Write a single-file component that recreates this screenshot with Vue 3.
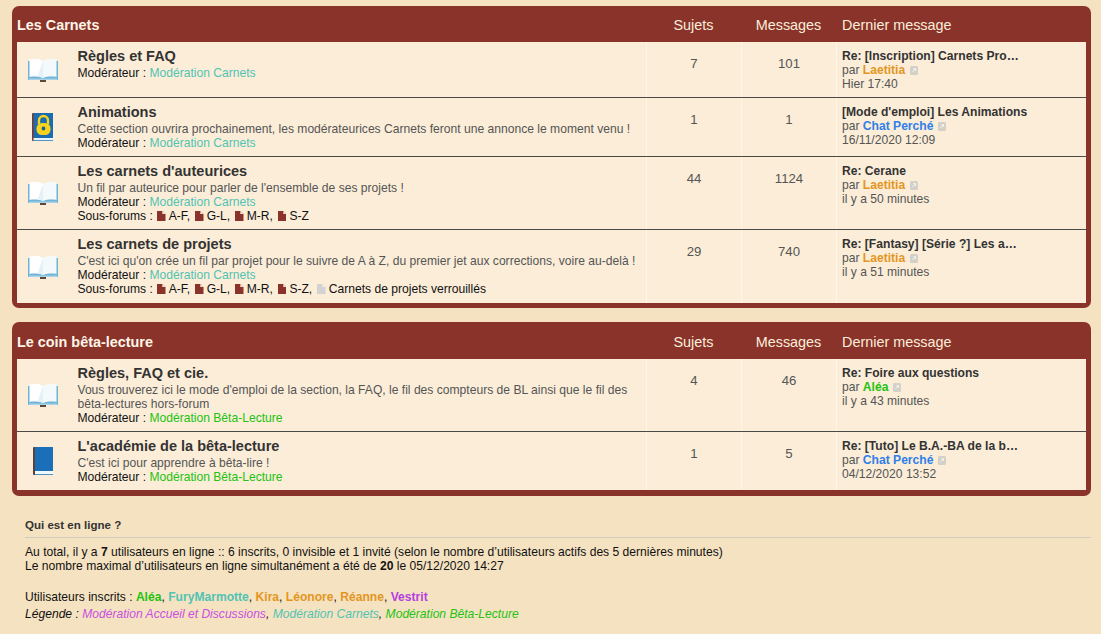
<script setup>
const teal = '#52c3b3'
const green = '#22c311'
const orange = '#e3961f'
const blue = '#2f7fe8'
const purple = '#b53fe0'

const carnetsMod = { label: 'Modération Carnets', color: teal }
const betaMod = { label: 'Modération Bêta-Lecture', color: green }

const sections = [
  {
    name: 'Les Carnets',
    rows: [
      {
        icon: 'open', height: 56, title: 'Règles et FAQ', mod: carnetsMod, topics: 7, posts: 101,
        last: 'Re: [Inscription] Carnets Pro…', author: 'Laetitia', color: orange, date: 'Hier 17:40',
      },
      {
        icon: 'lock', height: 59, title: 'Animations',
        desc: ['Cette section ouvrira prochainement, les modérateurices Carnets feront une annonce le moment venu !'],
        mod: carnetsMod, topics: 1, posts: 1,
        last: "[Mode d'emploi] Les Animations", author: 'Chat Perché', color: blue, date: '16/11/2020 12:09',
      },
      {
        icon: 'open', height: 73, title: "Les carnets d'auteurices",
        desc: ["Un fil par auteurice pour parler de l'ensemble de ses projets !"],
        mod: carnetsMod, subs: ['A-F', 'G-L', 'M-R', 'S-Z'], topics: 44, posts: 1124,
        last: 'Re: Cerane', author: 'Laetitia', color: orange, date: 'il y a 50 minutes',
      },
      {
        icon: 'open', height: 73, title: 'Les carnets de projets',
        desc: ["C'est ici qu'on crée un fil par projet pour le suivre de A à Z, du premier jet aux corrections, voire au-delà !"],
        mod: carnetsMod, subs: ['A-F', 'G-L', 'M-R', 'S-Z'], locked: 'Carnets de projets verrouillés', topics: 29, posts: 740,
        last: 'Re: [Fantasy] [Série ?] Les a…', author: 'Laetitia', color: orange, date: 'il y a 51 minutes',
      },
    ],
  },
  {
    name: 'Le coin bêta-lecture',
    rows: [
      {
        icon: 'open', height: 73, title: 'Règles, FAQ et cie.',
        desc: ["Vous trouverez ici le mode d'emploi de la section, la FAQ, le fil des compteurs de BL ainsi que le fil des", 'bêta-lectures hors-forum'],
        mod: betaMod, topics: 4, posts: 46,
        last: 'Re: Foire aux questions', author: 'Aléa', color: green, date: 'il y a 43 minutes',
      },
      {
        icon: 'closed', height: 58, title: "L'académie de la bêta-lecture",
        desc: ["C'est ici pour apprendre à bêta-lire !"],
        mod: betaMod, topics: 1, posts: 5,
        last: 'Re: [Tuto] Le B.A.-BA de la b…', author: 'Chat Perché', color: blue, date: '04/12/2020 13:52',
      },
    ],
  },
]

const online = [
  { name: 'Aléa', color: green },
  { name: 'FuryMarmotte', color: teal },
  { name: 'Kira', color: orange },
  { name: 'Léonore', color: orange },
  { name: 'Réanne', color: orange },
  { name: 'Vestrit', color: purple },
]

const legend = [
  { name: 'Modération Accueil et Discussions', color: '#c94fe0' },
  { name: 'Modération Carnets', color: teal },
  { name: 'Modération Bêta-Lecture', color: green },
]
</script>

<template>
  <div class="page">
    <section v-for="section in sections" :key="section.name" class="panel">
      <header class="panel-head">
        <h2 class="panel-name">{{ section.name }}</h2>
        <span class="head-num">Sujets</span>
        <span class="head-num">Messages</span>
        <span class="head-last">Dernier message</span>
      </header>

      <div
        v-for="row in section.rows"
        :key="row.title"
        class="row"
        :style="{ height: row.height + 'px' }"
      >
        <div class="forum-icon">
          <!-- livre ouvert -->
          <svg v-if="row.icon === 'open'" width="30" height="24" viewBox="0 0 30 24">
            <path d="M0 3h30v19H0z" fill="#6fb3d6" />
            <path d="M1.500 1.500C6 0 11 .5 15 3v17c-4-1.500-9-1.800-13.500-1z" fill="#fff" />
            <path d="M28.500 1.500C24 0 19 .5 15 3v17c4-1.500 9-1.800 13.500-1z" fill="#f4fafc" />
            <path d="M15 3v17c-1.500-.8-3.500-1.300-5.500-1.600z" fill="#e4f2f8" />
            <path d="M1 20.500h28V22H1z" fill="#a9d3e8" />
            <rect x="12" y="22" width="6" height="2" fill="#5b4a3c" />
          </svg>
          <!-- livre avec cadenas -->
          <svg v-else-if="row.icon === 'lock'" width="22" height="29" viewBox="0 0 22 29">
            <rect x="0" y="0" width="21" height="28" rx="1" fill="#7a3b2e" />
            <rect x="1.500" y="0" width="19.500" height="25" fill="#1b6cb0" />
            <rect x="1.500" y="25" width="19.500" height="2" fill="#eaf5fb" />
            <rect x="1.500" y="27" width="19.500" height="1" fill="#4d95c9" />
            <path d="M7 11V7.500a4.500 4.500 0 0 1 9 0V11" fill="none" stroke="#f7d31c" stroke-width="2.400" />
            <rect x="4.500" y="10" width="14" height="12" rx="5.500" fill="#f7d31c" />
            <path d="M11.500 13.500c1.200 0 1.800 1 1.800 1.900 0 1.100-.8 2-1.800 2s-1.800-.9-1.800-2c0-.9.600-1.900 1.800-1.900z" fill="#1b5f8c" />
          </svg>
          <!-- livre fermé -->
          <svg v-else width="21" height="28" viewBox="0 0 21 28">
            <rect x="0" y="0" width="20" height="28" rx="1" fill="#5d4037" />
            <rect x="2" y="0" width="18" height="24" fill="#1a6fb8" />
            <rect x="2" y="24" width="18" height="3" fill="#f2f9fc" />
            <rect x="2" y="27" width="18" height="1" fill="#4d95c9" />
          </svg>
        </div>

        <div class="forum-main">
          <a class="forum-title">{{ row.title }}</a>
          <p v-for="line in row.desc" :key="line" class="forum-desc">{{ line }}</p>
          <p class="forum-meta">
            Modérateur :
            <a :style="{ color: row.mod.color }">{{ row.mod.label }}</a>
          </p>
          <p v-if="row.subs" class="forum-meta">
            Sous-forums :
            <span v-for="(sub, i) in row.subs" :key="sub" class="sub">
              <svg class="doc" width="8.500" height="10" viewBox="0 0 8 10" preserveAspectRatio="none">
                <path d="M0 0h5l3 3v7H0z" fill="#89332a" />
                <path d="M5 0v3h3z" fill="#faecd6" />
              </svg>{{ sub }}{{ i < row.subs.length - 1 || row.locked ? ',' : '' }}
            </span>
            <span v-if="row.locked" class="sub">
              <svg class="doc" width="8.500" height="10" viewBox="0 0 8 10" preserveAspectRatio="none">
                <path d="M0 0h5l3 3v7H0z" fill="#d2d2d2" />
                <path d="M5 0v3h3z" fill="#faecd6" />
              </svg>{{ row.locked }}
            </span>
          </p>
        </div>

        <div class="num">{{ row.topics }}</div>
        <div class="num">{{ row.posts }}</div>

        <div class="last">
          <a class="last-title">{{ row.last }}</a>
          <p>
            par <strong :style="{ color: row.color }">{{ row.author }}</strong>
            <svg class="goto" width="8" height="9" viewBox="0 0 8 9">
              <rect width="8" height="9" rx="1.500" fill="#d3d0c8" />
              <path d="M2.500 6l2.500-3M3.500 2.500H5.500V5" fill="none" stroke="#f5f3ee" stroke-width="1" />
            </svg>
          </p>
          <p>{{ row.date }}</p>
        </div>
      </div>
    </section>

    <footer class="online">
      <h3 class="online-head">Qui est en ligne ?</h3>
      <p>Au total, il y a <b>7</b> utilisateurs en ligne :: 6 inscrits, 0 invisible et 1 invité (selon le nombre d’utilisateurs actifs des 5 dernières minutes)</p>
      <p>Le nombre maximal d’utilisateurs en ligne simultanément a été de <b>20</b> le 05/12/2020 14:27</p>
      <p class="online-users">
        Utilisateurs inscrits :
        <template v-for="(u, i) in online" :key="u.name"><b :style="{ color: u.color }">{{ u.name }}</b>{{ i < online.length - 1 ? ', ' : '' }}</template>
      </p>
      <p class="online-legend">
        Légende :
        <template v-for="(l, i) in legend" :key="l.name"><span :style="{ color: l.color }">{{ l.name }}</span>{{ i < legend.length - 1 ? ', ' : '' }}</template>
      </p>
    </footer>
  </div>
</template>

<style>
html,
body {
  margin: 0;
  background: #f5e2c1;
}
</style>

<style scoped>
.page {
  width: 1101px;
  height: 634px;
  overflow: hidden;
  box-sizing: border-box;
  padding: 6px 10px 0 12px;
  font-family: "Liberation Sans", Arial, sans-serif;
  font-size: 12.100px;
  line-height: 14px;
  color: #333;
}
p {
  margin: 0;
}

/* Blocs de forums */
.panel {
  background: #89332a;
  border-radius: 7px;
  padding: 0 5px 5px;
  margin-bottom: 14px;
}
.panel + .panel {
  padding-bottom: 6px;
}
.panel-head {
  display: flex;
  align-items: center;
  box-sizing: border-box;
  height: 36.400px;
  padding-top: 2px;
  color: #fbeedb;
  font-size: 14.400px;
}
.panel-name {
  flex: 0 0 629px;
  margin: 0;
  font-size: 14.400px;
  font-weight: bold;
  color: #fff6e8;
}
.head-num {
  flex: 0 0 95px;
  text-align: center;
}
.head-last {
  padding-left: 6px;
}

/* Lignes */
.row {
  display: flex;
  box-sizing: border-box;
  background: #fbedd8;
  border-bottom: 1px solid #4a4a46;
}
.row:last-child {
  border-bottom: 0;
}
.forum-icon {
  flex: 0 0 52px;
  display: flex;
  align-items: center;
  justify-content: center;
}
.forum-main {
  flex: 0 0 577px;
  box-sizing: border-box;
  padding: 5px 8px 0 8.500px;
  color: #000;
}
.forum-title {
  display: block;
  font-size: 14.520px;
  line-height: 19px;
  font-weight: bold;
  color: #333;
}
.forum-desc {
  color: #555;
}
.forum-meta {
  color: #111;
}
.sub {
  margin-right: 4px;
}
.doc {
  margin: 0 3px 0 1px;
  vertical-align: -1px;
}
.num {
  flex: 0 0 95px;
  box-sizing: border-box;
  border-left: 1px solid #fdf6ea;
  padding-top: 15px;
  text-align: center;
  font-size: 13.200px;
  color: #555;
}
.last {
  flex: 1;
  box-sizing: border-box;
  border-left: 1px solid #fdf6ea;
  padding: 7px 0 0 5px;
  color: #555;
}
.last-title {
  display: block;
  font-weight: bold;
  color: #333;
}
.goto {
  margin-left: 5px;
  vertical-align: -1px;
}

/* Qui est en ligne */
.online {
  padding: 9px 0 0 13px;
  color: #111;
}
.online-head {
  margin: 0 0 7px;
  padding-bottom: 5px;
  border-bottom: 1px solid #cfcbc2;
  font-size: 11.550px;
  line-height: 13px;
  font-weight: bold;
  color: #333;
}
.online-users {
  margin-top: 17px;
}
.online-legend {
  margin-top: 3px;
  font-style: italic;
}
</style>
